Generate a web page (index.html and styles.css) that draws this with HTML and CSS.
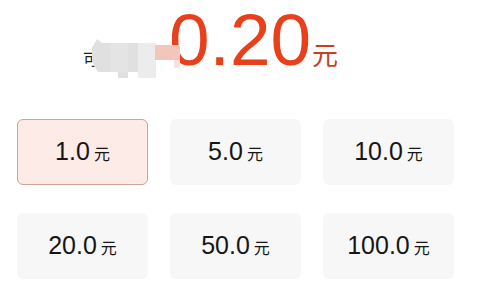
FILE: index.html
```html
<!DOCTYPE html>
<html lang="zh">
<head>
<meta charset="utf-8">
<link rel="stylesheet" href="styles.css">
</head>
<body>
<section class="balance">
  <span class="label">可提现</span>
  <span class="amount">0.20</span><span class="unit">元</span>
  <svg class="mask" width="96" height="46" viewBox="0 0 96 46" aria-hidden="true">
    <polygon points="4,12 9,3 14,7 50,7 50,36 40,36 40,42 30,42 30,36 10,36 6,30 4,22" fill="#e0e0e0"/>
    <rect x="22" y="7" width="18" height="29" fill="#e4e4e4"/>
    <rect x="50" y="7" width="18" height="35" fill="#ececec"/>
    <rect x="67" y="9" width="25" height="15" fill="#f3c6bd"/>
    <rect x="86" y="24" width="6" height="8" fill="#f8e1dc"/>
  </svg>
</section>
<section class="options">
  <div class="option selected"><span class="num">1.0</span><span class="yuan">元</span></div>
  <div class="option"><span class="num">5.0</span><span class="yuan">元</span></div>
  <div class="option"><span class="num">10.0</span><span class="yuan">元</span></div>
  <div class="option"><span class="num">20.0</span><span class="yuan">元</span></div>
  <div class="option"><span class="num">50.0</span><span class="yuan">元</span></div>
  <div class="option"><span class="num">100.0</span><span class="yuan">元</span></div>
</section>
</body>
</html>
```
FILE: styles.css
```css
html, body {
  margin: 0;
  padding: 0;
  background: #ffffff;
}
body {
  width: 480px;
  height: 293px;
  overflow: hidden;
  font-family: "Liberation Sans", "Noto Sans CJK SC", sans-serif;
}
.balance {
  position: relative;
  box-sizing: border-box;
  height: 119px;
  padding: 3px 0 0 83px;
  display: flex;
  align-items: baseline;
}
.label {
  font-family: "Noto Sans CJK SC", sans-serif;
  font-size: 16px;
  color: #222;
  margin-right: 38px;
}
.amount {
  font-size: 73px;
  line-height: 73px;
  color: #e8401a;
}
.unit {
  font-family: "Noto Sans CJK SC", sans-serif;
  font-size: 26px;
  color: #c8401e;
  margin-left: 1px;
}
.mask {
  position: absolute;
  left: 88px;
  top: 36px;
}
.options {
  display: grid;
  grid-template-columns: repeat(3, 131px);
  grid-auto-rows: 66px;
  column-gap: 22px;
  row-gap: 28px;
  padding-left: 17px;
}
.option {
  box-sizing: border-box;
  background: #f7f7f7;
  border-radius: 6px;
  display: flex;
  align-items: baseline;
  justify-content: center;
  padding-top: 18px;
  color: #161616;
}
.option.selected {
  background: #fcebe6;
  border: 1px solid #cda497;
  padding-top: 17px;
}
.num {
  font-size: 25px;
  line-height: 28px;
}
.yuan {
  font-family: "Noto Sans CJK SC", sans-serif;
  font-size: 16px;
  margin-left: 4px;
}
```
